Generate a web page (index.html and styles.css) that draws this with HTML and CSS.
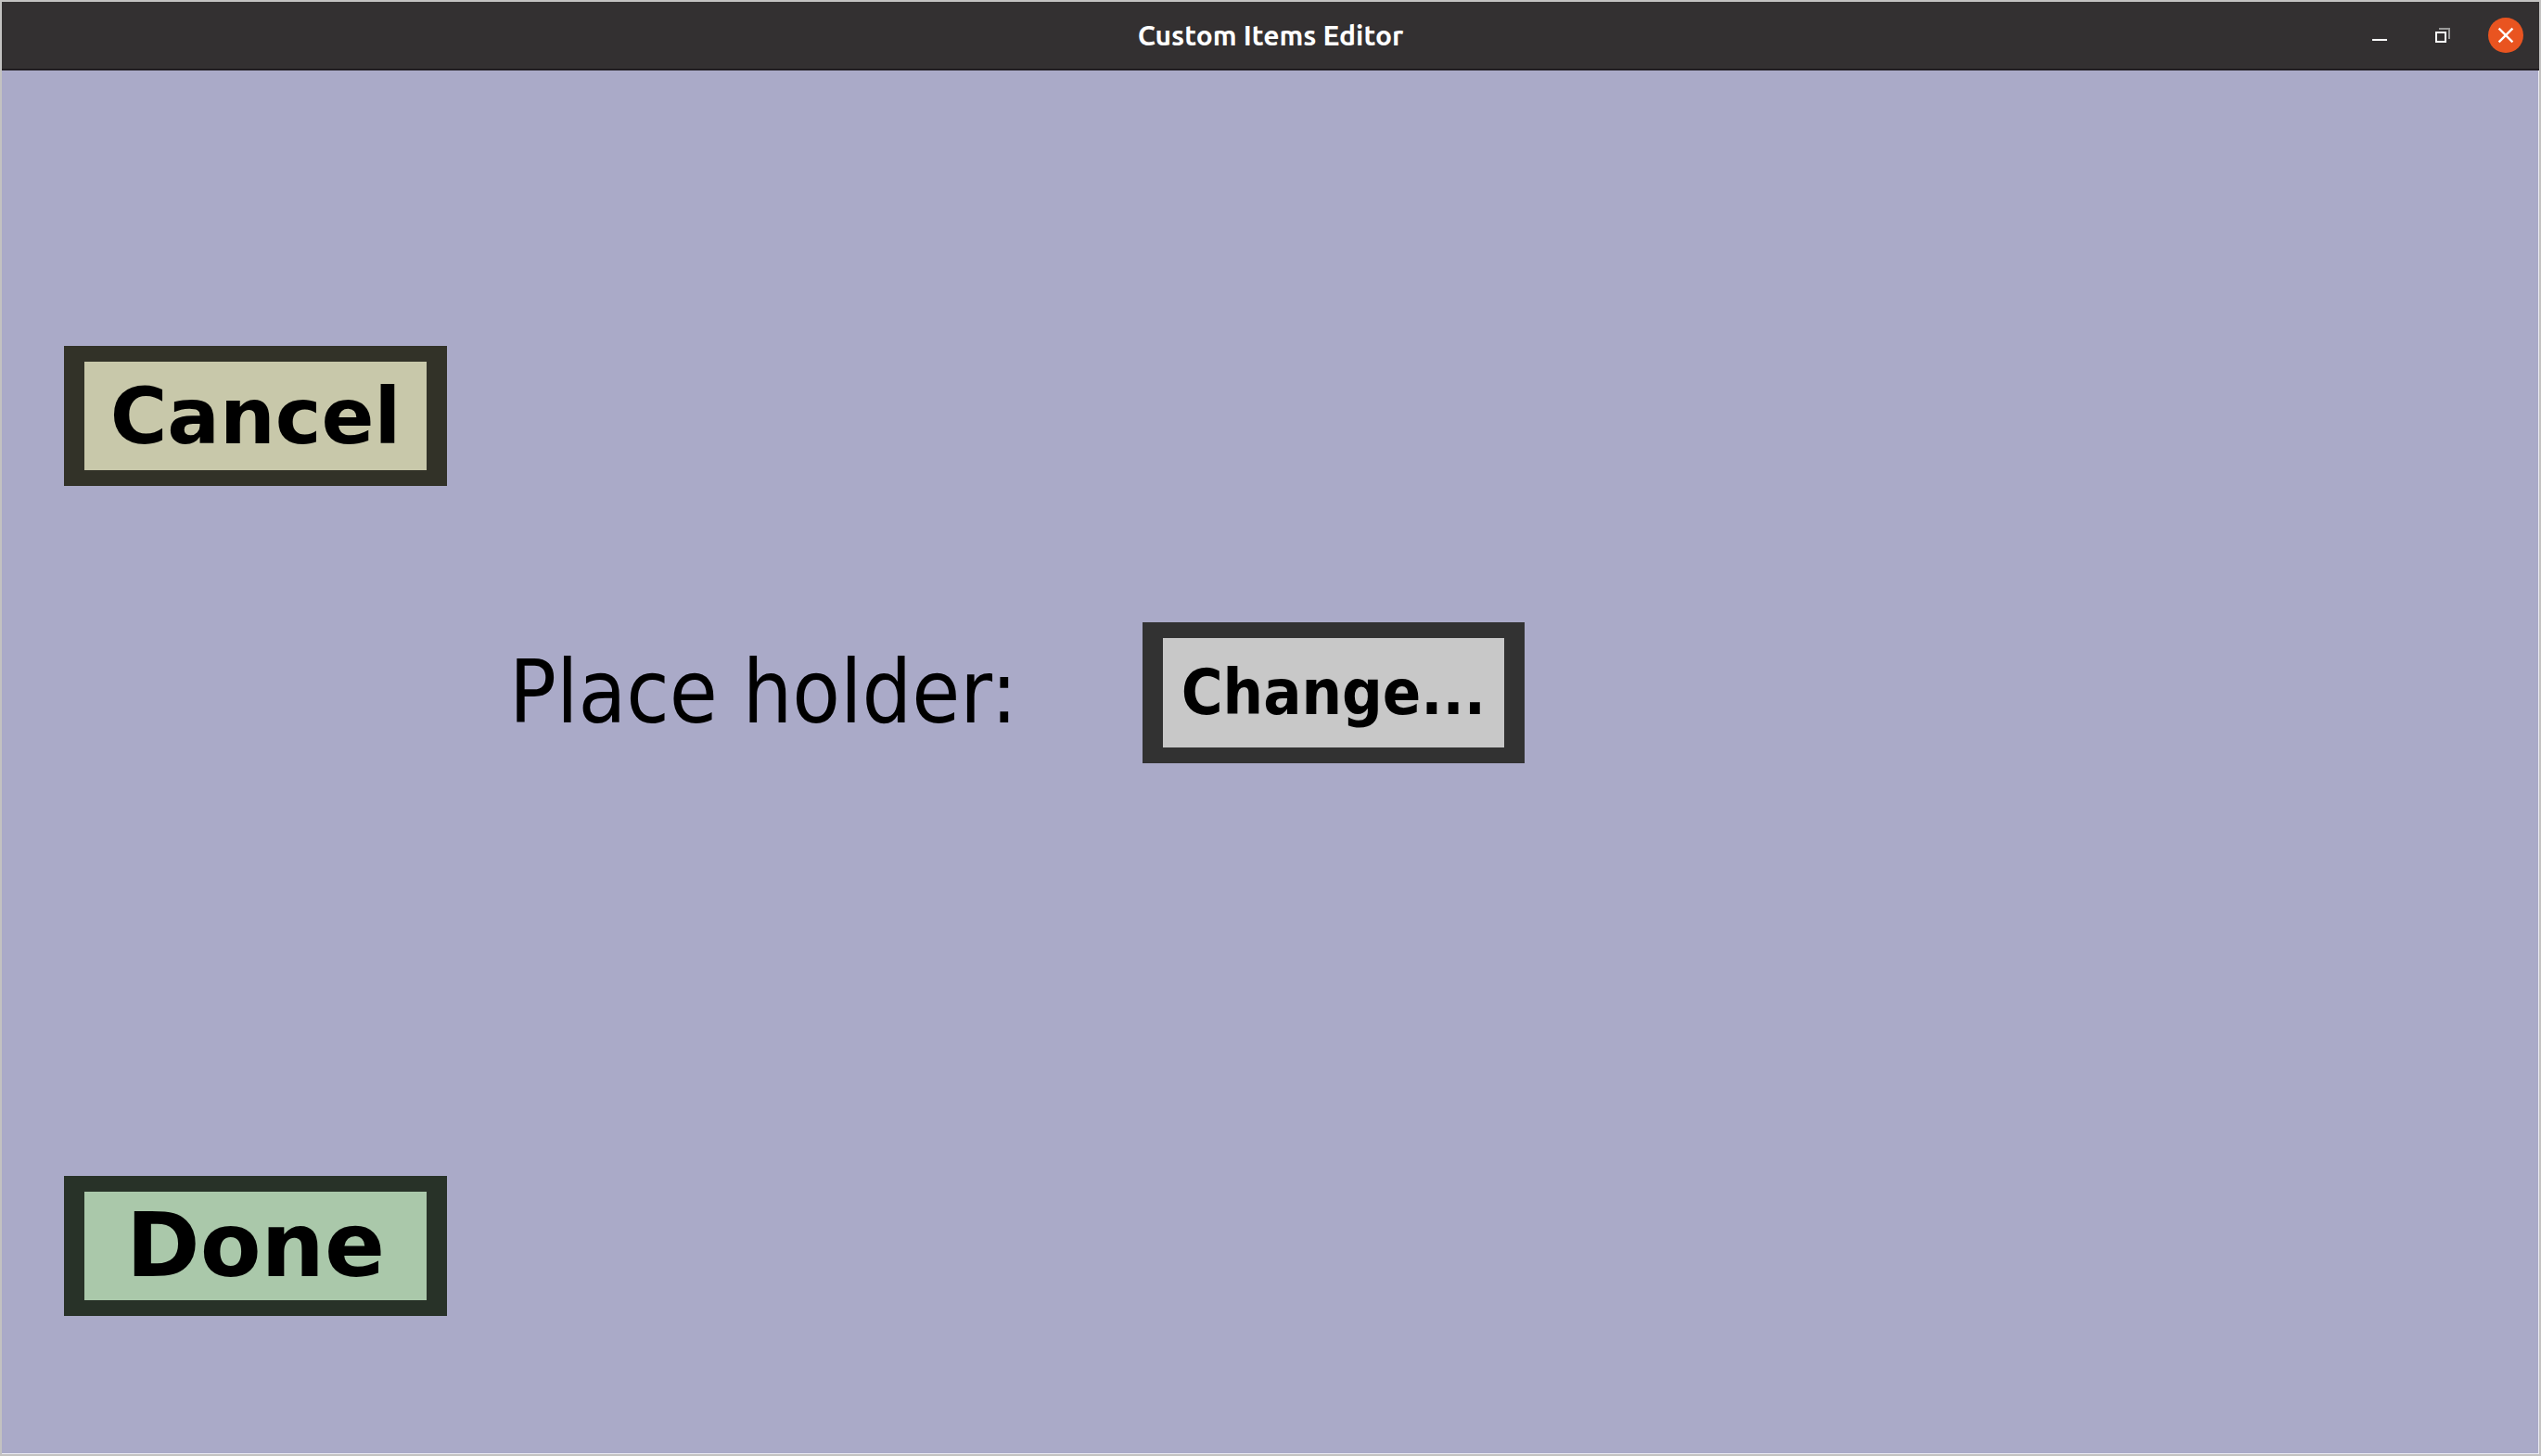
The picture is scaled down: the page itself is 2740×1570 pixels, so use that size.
FILE: index.html
```html
<!DOCTYPE html>
<html lang="en">
<head>
  <meta charset="utf-8">
  <title>Custom Items Editor</title>
  <link rel="stylesheet" href="styles.css">
</head>
<body>
  <div class="window">
    <header class="titlebar">
      <h1 class="title">Custom Items Editor</h1>
      <div class="controls">
        <button class="control" type="button" aria-label="Minimize">
          <svg viewBox="0 0 38 38" width="38" height="38"><path fill="#fff" d="M11 23h16v2H11z"/></svg>
        </button>
        <button class="control" type="button" aria-label="Restore">
          <svg viewBox="0 0 38 38" width="38" height="38"><path fill="#999" d="M15 11h12v12h-2V13H15z"/><path fill="none" stroke="#fff" stroke-width="2" d="M12 16h10v10H12z"/></svg>
        </button>
        <button class="control" type="button" aria-label="Close">
          <svg viewBox="0 0 38 38" width="38" height="38"><circle cx="19" cy="19" r="19" fill="#e95420"/><path fill="none" stroke="#fff" stroke-width="2.4" d="M11.6 11.6l14.8 14.8M26.4 11.6L11.6 26.4"/></svg>
        </button>
      </div>
    </header>
    <main class="editor">
      <button class="button cancel" type="button">Cancel</button>
      <label class="label" for="change">Place holder:</label>
      <button class="button change" id="change" type="button">Change...</button>
      <button class="button done" type="button">Done</button>
    </main>
  </div>
</body>
</html>
```
FILE: styles.css
```css
* {
  box-sizing: border-box;
}

body {
  margin: 0;
}

.window {
  display: flex;
  flex-direction: column;
  min-height: 100vh;
  border: 2px solid #c3c2c1;
}

.titlebar {
  display: grid;
  grid-template-columns: 1fr auto 1fr;
  align-items: center;
  height: 74px;
  padding: 0 17px;
  background: #333031;
  border-bottom: 2px solid #211d21;
}

.title {
  grid-column: 2;
  margin: 0;
  color: #fff;
  font: bold 30px/40px "Ubuntu", "Noto Sans", sans-serif;
}

.controls {
  display: flex;
  justify-content: flex-end;
  gap: 30px;
}

.control {
  width: 38px;
  height: 38px;
  padding: 0;
  border: 0;
  background: none;
}

.control svg {
  display: block;
}

.editor {
  flex: 1;
  display: grid;
  grid-template-columns: 5fr 30fr 5fr 50fr 30fr 80fr;
  grid-template-rows: 2fr 1fr 1fr 1fr 3fr 1fr 1fr;
  background: #aaaac8;
  border: solid #ececf4;
  border-width: 0 1px 1px 0;
}

.button {
  min-width: 0;
  min-height: 0;
  margin: -1px;
  padding: 0;
  border-style: solid;
  border-width: 17px 22px;
  border-radius: 0;
  color: #000;
  font-family: "DejaVu Sans", sans-serif;
  font-weight: bold;
  line-height: 1;
  white-space: nowrap;
}

.cancel {
  grid-area: 2 / 2;
  background: #c8c8aa;
  border-color: #323228;
  font-size: 84px;
}

.change {
  grid-area: 4 / 5;
  background: #c8c8c8;
  border-color: #323232;
  font-family: "DejaVu Sans Condensed", "DejaVu Sans", sans-serif;
  font-size: 68px;
}

.done {
  grid-area: 6 / 2;
  background: #aac8aa;
  border-color: #283228;
  font-size: 96px;
}

.label {
  grid-area: 4 / 4;
  align-self: center;
  min-width: 0;
  color: #000;
  font: 94px/1 "DejaVu Sans Condensed", "DejaVu Sans", sans-serif;
  white-space: nowrap;
}
```
